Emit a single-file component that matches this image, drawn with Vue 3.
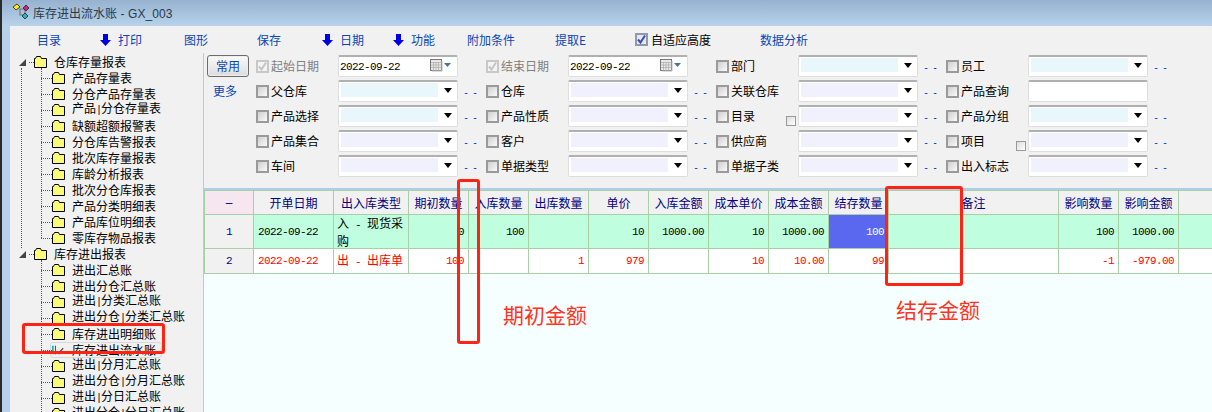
<script setup>
const tools = [
  { t: '目录', w: 63 },
  { t: '打印', w: 84, arrow: true },
  { t: '图形', w: 73 },
  { t: '保存', w: 65 },
  { t: '日期', w: 71, arrow: true },
  { t: '功能', w: 74, arrow: true },
  { t: '附加条件', w: 88 },
  { t: '提取E', w: 80 },
  { t: '自适应高度', w: 125, check: true },
  { t: '数据分析', w: 80 }
]
const trees = [
  { name: '仓库存量报表', line: true, kids: ['产品存量表', '分仓产品存量表', '产品|分仓存量表', '缺额超额报警表', '分仓库告警报表', '批次库存量报表', '库龄分析报表', '批次分仓库报表', '产品分类明细表', '产品库位明细表', '零库存物品报表'] },
  { name: '库存进出报表', line: false, kids: ['进出汇总账', '进出分仓汇总账', '进出|分类汇总账', '进出分仓|分类汇总账', '库存进出明细账', '库存进出流水账', '进出|分月汇总账', '进出分仓|分月汇总账', '进出|分日汇总账', '进出分仓|分日汇总账'] }
]
const fields = [
  { l: '起始日期', date: true, off: true }, { l: '结束日期', date: true, off: true }, { l: '部门', f: 'c', d: 1 }, { l: '员工', f: 'c', d: 1 },
  { l: '父仓库', f: 'c', d: 1 }, { l: '仓库', f: 'l', d: 1 }, { l: '关联仓库', f: 'l', d: 1 }, { l: '产品查询', blank: true },
  { l: '产品选择', f: 'c', d: 1 }, { l: '产品性质', f: 'l', d: 1 }, { l: '目录', f: 'l', d: 1, extra: true }, { l: '产品分组', f: 'c', d: 1 },
  { l: '产品集合', f: 'l', d: 1 }, { l: '客户', f: 'l', d: 1 }, { l: '供应商', f: 'l', d: 1 }, { l: '项目', f: 'l', d: 1, extra: true },
  { l: '车间', f: 'l', d: 1 }, { l: '单据类型', f: 'l', d: 1 }, { l: '单据子类', f: 'l', d: 1 }, { l: '出入标志', f: 'l', d: 1 }
]
const heads = ['–', '开单日期', '出入库类型', '期初数量', '入库数量', '出库数量', '单价', '入库金额', '成本单价', '成本金额', '结存数量', '备注', '影响数量', '影响金额', '']
const rows = [
  { n: '1', cls: 'green', date: '2022-09-22', type: ['入', '现货采购'], v: ['0', '100', '', '10', '1000.00', '10', '1000.00', '100', '', '100', '1000.00', ''] },
  { n: '2', cls: 'red', date: '2022-09-22', type: ['出', '出库单'], v: ['100', '', '1', '979', '', '10', '10.00', '99', '', '-1', '-979.00', ''] }
]
</script>

<template>
  <div class="window">
    <header class="titlebar">
      <svg class="appicon" width="18" height="18" viewBox="0 0 18 18">
        <path d="M8 6h5v6H8z" fill="none" stroke="#777" stroke-width="1.2" />
        <path d="M1 4l4-3 3 3-4 3z" fill="#ffe81a" stroke="#222" stroke-width=".8" />
        <path d="M11 5l3-3 3 3-3 3z" fill="#d0208a" stroke="#222" stroke-width=".8" />
        <path d="M10 13l3-3 3 3-3 3z" fill="#20b8c0" stroke="#222" stroke-width=".8" />
      </svg>
      <span class="title">库存进出流水账<span class="title-en"> - GX_003</span></span>
    </header>

    <div class="body">
      <nav class="toolbar">
        <div v-for="b in tools" :key="b.t" class="tool" :style="{ width: b.w + 'px' }">
          <svg v-if="b.arrow" class="arrow" width="11" height="12" viewBox="0 0 11 12">
            <path d="M3 0h5v6h3l-5.500 6L0 6h3z" fill="#0000e6" />
          </svg>
          <span v-if="b.check" class="check on-blue">
            <svg width="11" height="11" viewBox="0 0 11 11"><path d="M2 5.500l2.500 3L9 1.500" fill="none" stroke="#3a4fa8" stroke-width="2" /></svg>
          </span>
          <span :class="{ plain: b.check }">{{ b.t }}</span>
        </div>
      </nav>

      <div class="main">
        <aside class="tree">
          <section v-for="g in trees" :key="g.name" class="root" :class="{ linked: g.line }">
            <div class="row top">
              <svg class="exp" width="7" height="7" viewBox="0 0 7 7"><path d="M7 0v7H0z" fill="#444" /></svg>
              <span class="hdot"></span>
              <svg class="folder" width="13" height="12" viewBox="0 0 13 12">
                <path d="M.5 11.500V2.500h1l1-2h4l1 2h5v9z" fill="#fbfb78" stroke="#000" />
              </svg>
              <span class="name rootname">{{ g.name }}</span>
            </div>
            <div class="kids">
              <div v-for="k in g.kids" :key="k" class="row kid" :class="{ current: k === '库存进出流水账' }">
                <span class="hdot2"></span>
                <span v-if="k === '库存进出流水账'" class="pen">
                  <svg width="15" height="12" viewBox="0 0 15 12">
                    <path d="M1 1v10" stroke="#10b8c0" stroke-width="2" />
                    <path d="M4 1v10" stroke="#333" stroke-width="1" />
                    <path d="M7 10l6-6M8 11l1-2" stroke="#444" stroke-width="1.300" fill="none" />
                  </svg>
                </span>
                <svg v-else class="folder" width="13" height="12" viewBox="0 0 13 12">
                  <path d="M.5 11.500V2.500h1l1-2h4l1 2h5v9z" fill="#fbfb78" stroke="#000" />
                </svg>
                <span class="name">
                  <template v-for="(p, i) in k.split('|')" :key="i"><span v-if="i" class="bar">|</span>{{ p }}</template>
                </span>
              </div>
            </div>
          </section>
        </aside>

        <div class="right">
          <div class="filters">
            <div class="tabs">
              <button class="tab">常用</button>
              <span class="more">更多</span>
            </div>
            <div class="form">
              <div v-for="f in fields" :key="f.l" class="field">
                <div class="lab" :class="{ off: f.off }">
                  <span class="check" :class="{ dis: f.off }">
                    <svg v-if="f.off" width="11" height="11" viewBox="0 0 11 11"><path d="M2 5.500l2.500 3L9 1.500" fill="none" stroke="#c4c4c4" stroke-width="2" /></svg>
                  </span>
                  <span>{{ f.l }}</span>
                  <span v-if="f.extra" class="mini"></span>
                </div>
                <div class="select">
                  <template v-if="f.date">
                    <span class="dateval">2022-09-22</span>
                    <svg class="cal" width="21" height="13" viewBox="0 0 21 13">
                      <rect x=".5" y=".5" width="11" height="11" fill="#e8e8e8" stroke="#777" />
                      <path d="M1 3.500h10M1 6h10M1 8.500h10M3.500 3v8M6 3v8M8.500 3v8" stroke="#aaa" stroke-width=".7" />
                      <path d="M12 2v10H2" stroke="#bbb" fill="none" />
                      <path d="M14 4h7l-3.500 4z" fill="#50709c" />
                    </svg>
                  </template>
                  <template v-else-if="!f.blank">
                    <span class="fill" :class="f.f"></span>
                    <svg class="drop" width="8" height="5" viewBox="0 0 8 5"><path d="M0 0h8L4 5z" fill="#000" /></svg>
                  </template>
                </div>
                <span v-if="f.d" class="dots">- -</span>
              </div>
            </div>
          </div>

          <div class="gridwrap">
            <div class="grow ghead">
              <div v-for="(h, i) in heads" :key="i" class="cell" :class="{ pink: i === 0, lastc: i === 14 }">{{ h }}</div>
            </div>
            <div v-for="r in rows" :key="r.n" class="grow" :class="r.cls">
              <div class="cell num no">{{ r.n }}</div>
              <div class="cell num lft">{{ r.date }}</div>
              <div class="cell typ"><div>{{ r.type[0] }}<span class="sep"> - </span>{{ r.type[1] }}</div></div>
              <div v-for="(v, i) in r.v" :key="i" class="cell num rgt" :class="{ hi: r.n === '1' && i === 7, lastc: i === 11 }">{{ v }}</div>
            </div>
          </div>
        </div>
      </div>
    </div>

    <div class="mark m1"></div>
    <div class="mark m2"></div>
    <div class="mark m3"></div>
    <div class="note n1">期初金额</div>
    <div class="note n2">结存金额</div>
  </div>
</template>

<style>
html, body { margin: 0; background: #f1f1f1; }
</style>

<style scoped>
* { box-sizing: border-box; }
.window {
  position: relative; width: 1212px; height: 412px; overflow: hidden; padding-left: 2px;
  background: #2a2a2a; font: 12px/16px "Noto Sans CJK SC", "Noto Sans", sans-serif; color: #000;
}
.titlebar {
  height: 26px; display: flex; align-items: center; padding-left: 10px;
  background: linear-gradient(#97b2cf, #b7d2ea); color: #2c3a4a;
}
.appicon { margin-right: 2px; margin-top: -2px; }
.title { font-size: 12px; margin-left: 1px; }
.title-en { font-family: "Liberation Sans", sans-serif; letter-spacing: .1px; white-space: pre; }
.body { height: 386px; border-left: 8px solid #b7d2ea; background: #f1f1f1; display: flex; flex-direction: column; }
.toolbar { height: 27px; display: flex; align-items: center; padding-left: 27px; color: #0a46b4; }
.tool { display: flex; align-items: center; flex: none; }
.arrow { margin-right: 7px; }
.plain { color: #000; margin-left: 1px; }
.main { flex: 1; display: flex; min-height: 0; }
.tree { width: 193px; flex: none; padding-top: 1px; overflow: hidden; }
.root { position: relative; }
.root.linked::before { content: ""; position: absolute; left: 11px; top: 14px; bottom: -2px; border-left: 1px dotted #555; }
.row { height: 16px; display: flex; align-items: center; position: relative; white-space: nowrap; }
.top { padding-left: 9px; }
.exp { flex: none; margin-right: 3px; }
.hdot { width: 5px; border-top: 1px dotted #555; flex: none; }
.folder { flex: none; }
.name { margin-left: 7px; margin-top: -1px; }
.kids { position: relative; margin-left: 31px; }
.kids::before { content: ""; position: absolute; left: 0; top: -2px; bottom: 8px; border-left: 1px dotted #555; }
.hdot2 { width: 11px; border-top: 1px dotted #555; flex: none; }
.bar { display: inline-block; width: 5px; text-align: center; font-family: "Liberation Mono", monospace; font-size: 10px; }
.current::after {
  content: ""; position: absolute; left: 9px; width: 110px; top: 0; height: 14px;
  border: 1px solid #d8d8d8; border-radius: 3px;
}
.pen { width: 13px; height: 12px; flex: none; display: flex; }
.right { flex: 1; min-width: 0; border-left: 1px solid #b0cde8; display: flex; flex-direction: column; }
.filters { height: 135px; flex: none; display: flex; padding-top: 2px; }
.tabs { width: 52px; flex: none; display: flex; flex-direction: column; align-items: flex-start; padding-left: 3px; }
.tab {
  width: 42px; height: 22px; padding: 0; font: inherit; color: #0a46b4;
  border: 1px solid #6c6c6c; border-radius: 3px; background: linear-gradient(#fafafa, #dcdcdc); box-shadow: inset 0 0 0 1px #eee;
}
.more { margin: 6px 0 0 6px; color: #0a46b4; }
.form { display: grid; grid-template-columns: repeat(4, 230px); grid-auto-rows: 22px; row-gap: 3px; }
.field { display: flex; align-items: center; }
.lab { width: 82px; flex: none; display: flex; align-items: center; position: relative; }
.lab.off { color: #808080; }
.check {
  width: 13px; height: 13px; flex: none; margin-right: 2px; border: 2px solid #9a9a9a;
  background: linear-gradient(135deg, #cfcfcf, #fafafa); display: flex; align-items: center; justify-content: center;
}
.check svg { flex: none; margin: -1px; }
.check.dis { border-color: #c8c8c8; background: #f4f4f4; }
.on-blue { border-color: #8f98ac; background: #e6e8f0; }
.mini { position: absolute; left: 70px; top: 8px; width: 10px; height: 10px; border: 1px solid #999; background: linear-gradient(135deg, #ddd, #fff); }
.select {
  width: 120px; height: 22px; flex: none; position: relative; display: flex; align-items: center; background: #fff;
  border: 1px solid #dedede; border-top: 2px solid #b0b0b0; border-radius: 2px;
}
.fill { position: absolute; left: 2px; top: 1px; width: 97px; height: 14px; }
.fill.c { background: #e8f7fb; }
.fill.l { background: #f0f1fc; }
.drop { position: absolute; right: 5px; top: 6px; }
.dateval { font: 11px/16px "Liberation Mono", monospace; letter-spacing: -.6px; margin-left: 1px; }
.cal { position: absolute; left: 91px; top: 2px; }
.dots { margin-left: 5px; font: 10px/16px "DejaVu Sans Mono", monospace; letter-spacing: -1.500px; color: #0033e0; white-space: pre; margin-top: 3px; }
.gridwrap { flex: 1; border-top: 2px solid #b0cde8; background: #f6ffff; }
.grow {
  display: grid; grid-template-columns: 50px 80px 75px repeat(8, 60px) 170px 60px 60px 1fr;
  border-bottom: 1px solid #a8cfa8;
}
.ghead { border-top: 1px solid #a8cfa8; height: 25px; background: #f1f1f1; color: #000080; }
.cell { border-right: 1px solid #a8cfa8; display: flex; align-items: center; justify-content: center; min-width: 0; overflow: hidden; }
.cell:first-child { border-left: 1px solid #a8cfa8; }
.pink { background: #f5e6f0; font-family: "Liberation Sans", sans-serif; }
.lastc { border-right: 0; }
.green { height: 34px; background: #bfffdf; }
.red { height: 25px; background: #fff; color: #f00; }
.num { font: 11px/16px "Liberation Mono", monospace; letter-spacing: -.6px; }
.no { background: #f1f1f1; color: #000080; }
.rgt { justify-content: flex-end; padding-right: 4px; }
.lft { justify-content: flex-start; padding-left: 4px; }
.typ { justify-content: flex-start; padding: 0 1px 0 3px; }
.sep { font: 11px/16px "Liberation Mono", monospace; letter-spacing: -.6px; white-space: pre; }
.hi { background: #5a68f0; color: #fff; }
.mark { position: absolute; border: 3px solid #ff2313; border-radius: 3px; pointer-events: none; }
.m1 { left: 457px; top: 179px; width: 23px; height: 165px; }
.m2 { left: 885px; top: 186px; width: 78px; height: 100px; }
.m3 { left: 22px; top: 323px; width: 143px; height: 31px; }
.note { position: absolute; font-size: 21px; line-height: 26px; color: #ff3322; white-space: nowrap; }
.n1 { left: 503px; top: 301px; }
.n2 { left: 896px; top: 296px; }
</style>
